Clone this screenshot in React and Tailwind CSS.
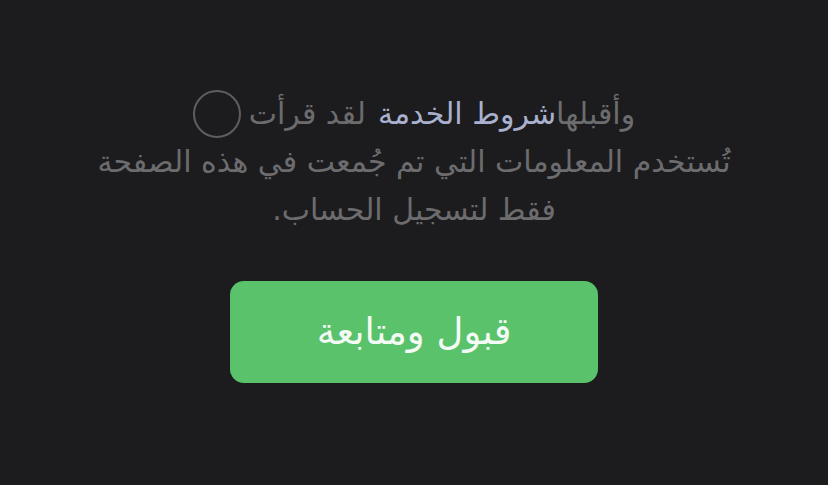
import React from "react";

export default function App() {
  return (
    <div
      className="w-full h-[485px] bg-[#1c1c1e] flex flex-col items-center"
      style={{ fontFamily: '"DejaVu Sans", "Noto Sans", sans-serif' }}
    >
      {/* consent row */}
      <div dir="ltr" className="mt-[90px] flex items-center text-[30px] leading-[48px]">
        <span className="w-[48px] h-[48px] rounded-full border-2 border-[#5e5e60] mr-[8px]" />
        <span dir="rtl" className="text-[#6c6c6e]">لقد قرأت</span>
        <span dir="rtl" className="text-[#a9b1cf] ml-[12px]">شروط الخدمة</span>
        <span dir="rtl" className="text-[#6c6c6e]">وأقبلها</span>
      </div>

      <p dir="rtl" className="text-center text-[30px] leading-[48px] text-[#6c6c6e]">
        تُستخدم المعلومات التي تم جُمعت في هذه الصفحة
        <br />
        فقط لتسجيل الحساب.
      </p>

      <button
        type="button"
        dir="rtl"
        className="mt-[47px] w-[368px] h-[102px] rounded-[14px] bg-[#5ac26b] text-[#f4fbf5] text-[37px]"
      >
        قبول ومتابعة
      </button>
    </div>
  );
}
